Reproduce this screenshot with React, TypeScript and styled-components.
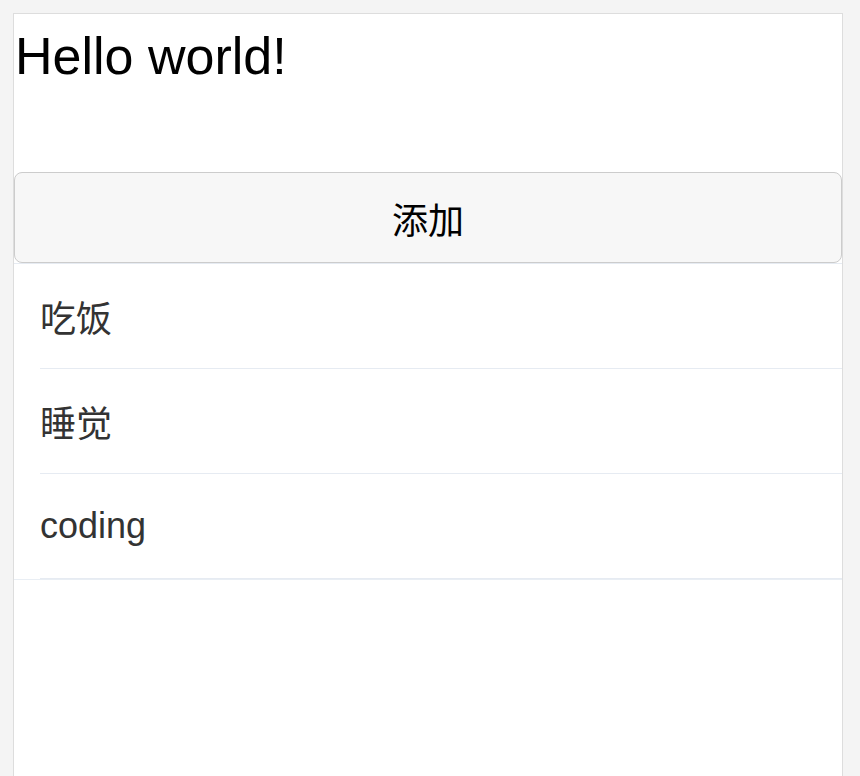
import React from "react";
import styled, { createGlobalStyle } from "styled-components";

const Global = createGlobalStyle`
  html, body {
    margin: 0;
    padding: 0;
    background: #f4f4f4;
  }
  body {
    font-family: "Liberation Sans", Arial, "Noto Sans CJK SC", sans-serif;
  }
`;

const Page = styled.div`
  margin: 13px 0 0 13px;
  width: 830px;
  min-height: 763px;
  box-sizing: border-box;
  background: #ffffff;
  border: 1px solid #dddddd;
  border-bottom: none;
  display: flex;
  flex-direction: column;
`;

const Title = styled.h1`
  margin: 12px 0 86px 1px;
  font-size: 52px;
  line-height: 60px;
  font-weight: 400;
  color: #000;
`;

const AddButton = styled.button`
  width: 100%;
  height: 91px;
  box-sizing: border-box;
  border: 1px solid #cccccc;
  border-radius: 8px;
  background: #f7f7f7;
  color: #000;
  font-family: "Liberation Sans", Arial, "Noto Sans CJK SC", sans-serif;
  font-size: 36px;
  cursor: pointer;
  padding: 0;
`;

const List = styled.ul`
  list-style: none;
  margin: 0;
  padding: 0;
  border-top: 1px solid #e6ebf2;
  border-bottom: 1px solid #e9eef4;
`;

const Item = styled.li`
  margin-left: 26px;
  height: 104px;
  display: flex;
  align-items: center;
  border-bottom: 1px solid #e6ebf2;
  font-size: 36px;
  color: #333333;
`;

const items = ["吃饭", "睡觉", "coding"];

export default function App() {
  return (
    <>
      <Global />
      <Page>
        <Title>Hello world!</Title>
        <AddButton>添加</AddButton>
        <List>
          {items.map((t) => (
            <Item key={t}>{t}</Item>
          ))}
        </List>
      </Page>
    </>
  );
}
